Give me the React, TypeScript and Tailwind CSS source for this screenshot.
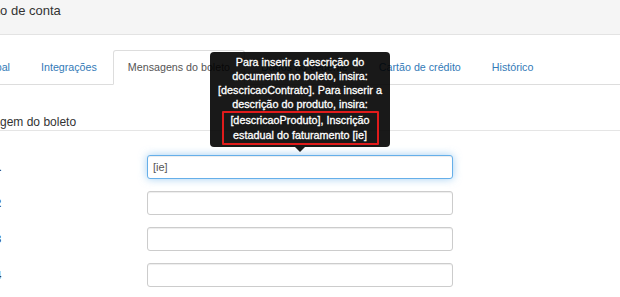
const tabs = [
  { label: 'Principal' },
  { label: 'Integrações' },
  { label: 'Mensagens do boleto', active: true },
  { label: 'Dados do cedente' },
  { label: 'Cartão de crédito' },
  { label: 'Histórico' },
]

function Tooltip() {
  return (
    <div className="absolute bottom-[calc(100%+8px)] left-1/2 z-10 w-[180px] -translate-x-1/2 rounded-[4px] bg-black/90 pt-[3px] pb-[2px] text-center text-[10.8px] whitespace-nowrap text-white [-webkit-text-stroke:0.3px_white]">
      <div className="leading-[14px]">Para inserir a descrição do</div>
      <div className="leading-[14px]">documento no boleto, insira:</div>
      <div className="leading-[14px]">[descricaoContrato]. Para inserir a</div>
      <div className="leading-[14px]">descrição do produto, insira:</div>
      <div className="mx-auto w-[157px] rounded-[1px] border-2 border-[#e01b1b]">
        <div className="leading-[15px]">[descricaoProduto], Inscrição</div>
        <div className="leading-[15px]">estadual do faturamento [ie]</div>
      </div>
      <div className="absolute top-full left-1/2 h-0 w-0 -translate-x-1/2 border-x-[5px] border-t-[5px] border-x-transparent border-t-black/90" />
    </div>
  )
}

function Row({ n, value, focused }: { n: number; value?: string; focused?: boolean }) {
  return (
    <div className="flex items-center">
      <div className="-ml-[99px] w-[100px] shrink-0 text-right text-[11px] font-bold text-[#333]">Linha {n}</div>
      <div className="relative ml-[146px] w-[306px] shrink-0">
        {focused && <Tooltip />}
        <div
          className={
            focused
              ? 'h-[24px] rounded-[3px] border border-[#66afe9] bg-white px-[5px] text-[11px] leading-[22px] text-[#555] shadow-[inset_0_1px_1px_rgba(0,0,0,0.075),0_0_8px_rgba(102,175,233,0.6)]'
              : 'h-[24px] rounded-[3px] border border-[#ccc] bg-white px-[5px] text-[11px] leading-[22px] text-[#555] shadow-[inset_0_1px_1px_rgba(0,0,0,0.075)]'
          }
        >
          {value}
        </div>
      </div>
    </div>
  )
}

export default function App() {
  return (
    <div className="h-[297px] w-[620px] overflow-hidden bg-white font-['Liberation_Sans',Arial,sans-serif]">
      <header className="h-[35px] border-b border-[#e3e3e3] bg-[#f5f5f5] pt-[3px]">
        <div className="-ml-[70px] text-[13px] leading-[16px] whitespace-nowrap text-[#333]">Configuração de conta</div>
      </header>

      <div className="pt-[15px]">
        <nav className="flex border-b border-[#ddd] whitespace-nowrap">
          <div className="-ml-[46px] flex">
            {tabs.map((t) => (
              <div
                key={t.label}
                className={
                  t.active
                    ? '-mb-px mr-[1px] flex h-[35px] items-center rounded-t-[3px] border border-[#ddd] border-b-white bg-white px-[14px] text-[10.7px] text-[#555]'
                    : '-mb-px mr-[1px] flex h-[35px] items-center border border-transparent px-[14px] text-[10.7px] text-[#337ab7]'
                }
              >
                {t.label}
              </div>
            ))}
          </div>
        </nav>
      </div>

      <div className="mt-[29px] border-b border-[#e5e5e5]">
        <div className="-ml-[36px] text-[12px] leading-[16px] whitespace-nowrap text-[#333]">Mensagem do boleto</div>
      </div>

      <div className="mt-[24px] flex flex-col gap-[12px]">
        <Row n={1} value="[ie]" focused />
        <Row n={2} />
        <Row n={3} />
        <Row n={4} />
      </div>
    </div>
  )
}
